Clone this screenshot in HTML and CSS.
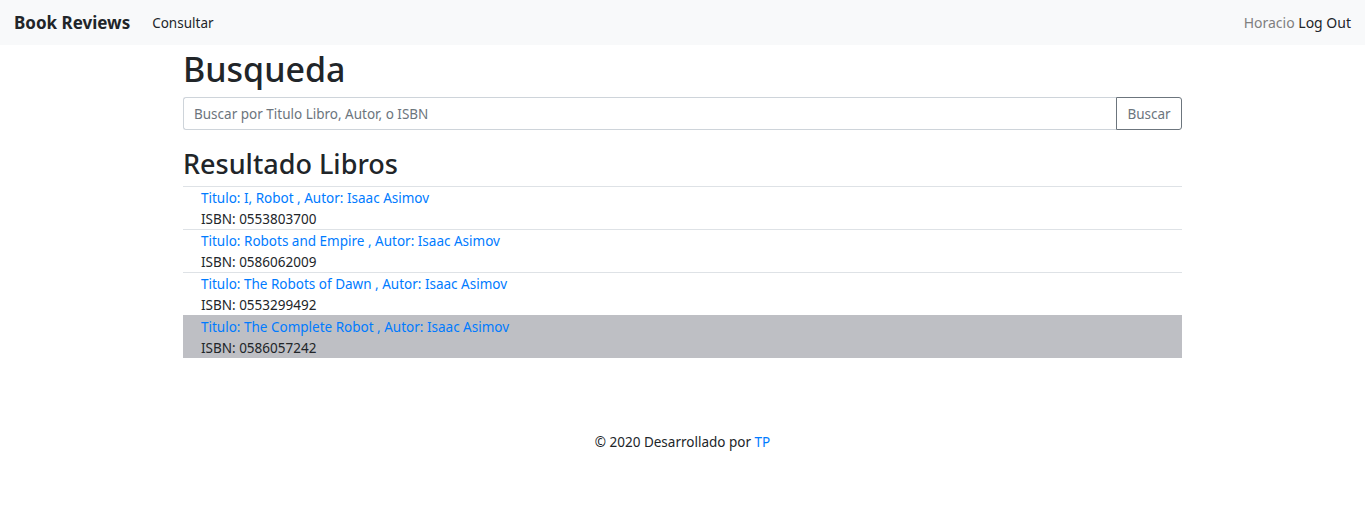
FILE: index.html
```html
<!DOCTYPE html>
<html lang="es">
<head>
<meta charset="utf-8">
<title>Book Reviews</title>
<link rel="stylesheet" href="styles.css">
</head>
<body>
<nav class="navbar">
  <div class="nav-left">
    <a class="brand" href="#">Book Reviews</a>
    <a class="nav-link" href="#">Consultar</a>
  </div>
  <div class="nav-right">
    <span class="user">Horacio</span>
    <a class="logout" href="#">Log Out</a>
  </div>
</nav>
<main class="container">
  <h1 class="title">Busqueda</h1>
  <form class="search">
    <input class="search-input" type="text" placeholder="Buscar por Titulo Libro, Autor, o ISBN">
    <button class="search-btn" type="button">Buscar</button>
  </form>
  <h2 class="subtitle">Resultado Libros</h2>
  <ul class="results">
    <li class="item">
      <a class="item-title" href="#">Titulo: I, Robot , Autor: Isaac Asimov</a>
      <div class="item-isbn">ISBN: 0553803700</div>
    </li>
    <li class="item">
      <a class="item-title" href="#">Titulo: Robots and Empire , Autor: Isaac Asimov</a>
      <div class="item-isbn">ISBN: 0586062009</div>
    </li>
    <li class="item">
      <a class="item-title" href="#">Titulo: The Robots of Dawn , Autor: Isaac Asimov</a>
      <div class="item-isbn">ISBN: 0553299492</div>
    </li>
    <li class="item active">
      <a class="item-title" href="#">Titulo: The Complete Robot , Autor: Isaac Asimov</a>
      <div class="item-isbn">ISBN: 0586057242</div>
    </li>
  </ul>
</main>
<footer class="footer">© 2020 Desarrollado por <a href="#">TP</a></footer>
</body>
</html>
```
FILE: styles.css
```css
* { box-sizing: border-box; }
body {
  margin: 0;
  font-family: "Noto Sans", "Open Sans", sans-serif;
  font-size: 13.5px;
  color: #212529;
  background: #fff;
}
a { text-decoration: none; color: #007bff; }
.navbar {
  height: 45px;
  background: #f8f9fa;
  display: flex;
  align-items: center;
  justify-content: space-between;
  padding: 0 14px;
}
.nav-left { display: flex; align-items: center; }
.brand {
  font-size: 17px;
  font-weight: 700;
  color: #212529;
  margin-right: 22px;
}
.nav-link { color: #212529; font-size: 13.5px; }
.nav-right { font-size: 14px; }
.user { color: #7f7f7f; }
.logout { color: #212529; }
.container {
  width: 999px;
  margin: 0 auto;
}
.title {
  margin: 0;
  font-size: 34px;
  font-weight: 500;
  line-height: 48px;
  height: 52px;
}
.search { display: flex; height: 33px; }
.search-input {
  flex: 1;
  height: 33px;
  border: 1px solid #ced4da;
  border-right: none;
  border-radius: 3px 0 0 3px;
  padding: 0 10px;
  font: inherit;
  font-size: 13.5px;
  color: #495057;
}
.search-input::placeholder { color: #6c757d; }
.search-btn {
  width: 66px;
  height: 33px;
  border: 1px solid #6c757d;
  border-radius: 0 3px 3px 0;
  background: #fff;
  color: #6c757d;
  font: inherit;
  font-size: 13.5px;
  padding: 0;
}
.subtitle {
  margin: 0;
  padding-top: 14px;
  font-size: 27px;
  font-weight: 500;
  line-height: 40px;
  height: 56px;
}
.results { list-style: none; margin: 0; padding: 0; }
.item {
  height: 43px;
  border-top: 1px solid #dee2e6;
  padding: 1px 0 0 18px;
  line-height: 21px;
}
.item.active { background: #bebfc4; border-top-color: #bebfc4; }
.item-title { display: block; }
.footer {
  text-align: center;
  margin-top: 74px;
  line-height: 20px;
}
```
